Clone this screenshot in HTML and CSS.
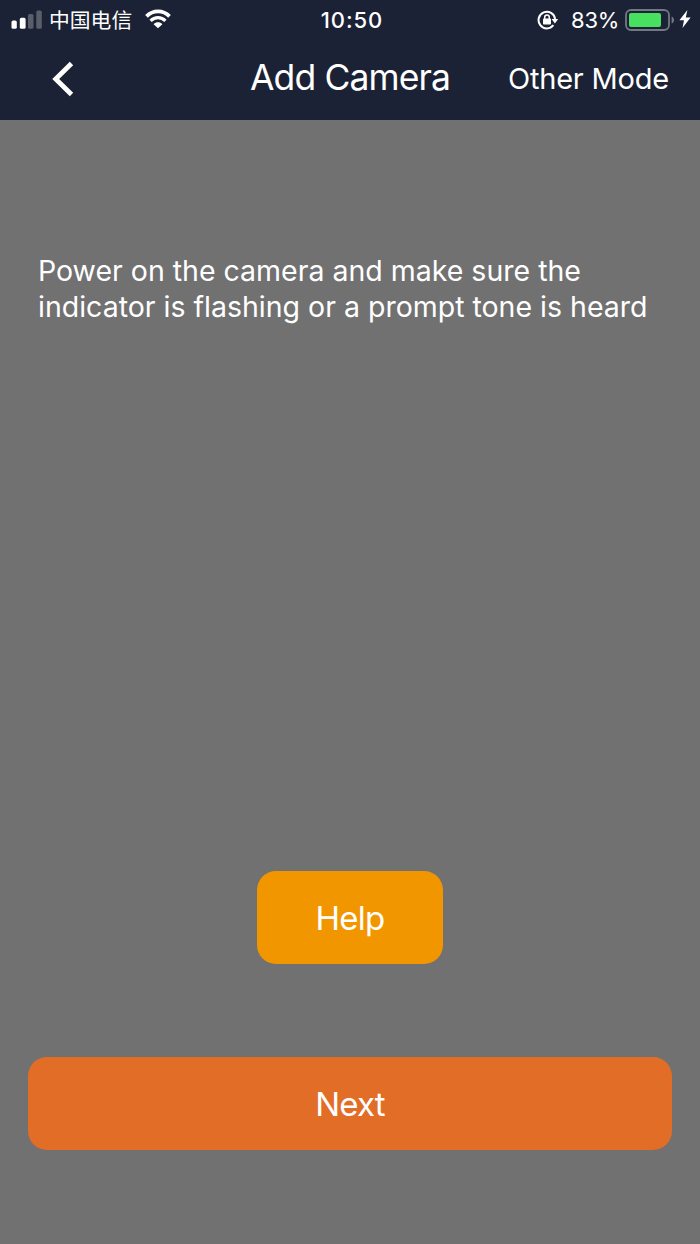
FILE: index.html
```
<!DOCTYPE html>
<html lang="en">
<head>
    <meta charset="UTF-8" />
    <meta name="viewport" content="width=device-width, initial-scale=1.0"/>
    <title>Add Camera</title>
    <link rel="stylesheet" href="styles.css">
</head>
<body>
    <header>
        <div class="status-bar">
            <div class="status-left">
                <svg class="signal" width="31" height="19" viewBox="0 0 31 19">
                    <rect x="0.5" y="10.5" width="5.3" height="8.3" rx="1.6" fill="#fff"/>
                    <rect x="8.8" y="7.8" width="5.8" height="11" rx="1.6" fill="#fff"/>
                    <rect x="17" y="4" width="5.5" height="14.8" rx="1.6" fill="#5a5e6b"/>
                    <rect x="25.3" y="0.5" width="5.5" height="18.3" rx="1.6" fill="#5a5e6b"/>
                </svg>
                <span class="carrier" lang="zh">中国电信</span>
                <svg class="wifi" width="26" height="20" viewBox="0 0 26 20">
                    <path d="M1.5 7.3C8 .7 18 .7 24.5 7.3" fill="none" stroke="#fff" stroke-width="3.8"/>
                    <path d="M5.6 11.8C9.8 7.6 16.2 7.6 20.4 11.8" fill="none" stroke="#fff" stroke-width="3.2"/>
                    <path d="M13 19.2L8.6 15.2C11.2 12.7 14.8 12.7 17.4 15.2Z" fill="#fff"/>
                </svg>
            </div>
            <div class="time">10:50</div>
            <div class="status-right">
                <svg class="lock" width="22" height="20" viewBox="0 0 22 20">
                    <path d="M16.4 15.2A8.3 8.3 0 1 1 18.1 9" fill="none" stroke="#fff" stroke-width="2"/>
                    <path d="M14.6 9h6.6L17.9 13.4Z" fill="#fff"/>
                    <rect x="6" y="8.6" width="8" height="6" rx="0.8" fill="#fff"/>
                    <path d="M7.7 9V7.2a2.3 2.3 0 0 1 4.6 0V9" fill="none" stroke="#fff" stroke-width="1.5"/>
                </svg>
                <span class="percent">83%</span>
                <svg class="battery" width="50" height="22" viewBox="0 0 50 22">
                    <rect x="1" y="1" width="43" height="20" rx="5" fill="none" stroke="#747883" stroke-width="1.8"/>
                    <rect x="4" y="4" width="32" height="14" rx="2" fill="#47e15f"/>
                    <path d="M46.6 7.5C49.8 8.5 49.8 13.5 46.6 14.5Z" fill="#747883"/>
                </svg>
                <svg class="bolt" width="12" height="18" viewBox="0 0 12 18">
                    <path d="M8.4 0L.4 10.2H5L3.5 18L11.6 7.4H6.8Z" fill="#fff"/>
                </svg>
            </div>
        </div>
        <nav>
            <a class="back" aria-label="Back">
                <svg width="24" height="38" viewBox="0 0 24 38">
                    <path d="M20.5 3.5L4.7 19L20.5 34.5" fill="none" stroke="#fff" stroke-width="4.8"/>
                </svg>
            </a>
            <h1>Add Camera</h1>
            <a class="mode">Other Mode</a>
        </nav>
    </header>

    <main>
        <p>Power on the camera and make sure the<br>indicator is flashing or a prompt tone is heard</p>
        <button class="help">Help</button>
        <button class="next">Next</button>
    </main>
</body>
</html>
```
FILE: styles.css
```
* {
    box-sizing: border-box;
}

body {
    margin: 0;
    height: 1244px;
    display: flex;
    flex-direction: column;
    font-family: Inter, "Noto Sans CJK SC", sans-serif;
    background: #717171;
    color: white;
    overflow: hidden;
}

svg {
    display: block;
    flex: none;
}

header {
    height: 120px;
    background: #1c2235;
}

.status-bar {
    height: 40px;
    display: grid;
    grid-template-columns: 1fr auto 1fr;
    align-items: center;
    padding: 0 9px 0 11px;
    white-space: nowrap;
}

.status-left, .status-right {
    display: flex;
    align-items: center;
}

.status-right {
    justify-content: flex-end;
}

.signal {
    margin-top: -2px;
}

.carrier {
    font-family: "Noto Sans CJK SC", sans-serif;
    font-size: 20.8px;
    line-height: 38px;
    margin: -2px 13px 0 7px;
}

.wifi {
    margin-top: -3px;
}

.time {
    font-size: 22px;
    font-weight: 500;
    letter-spacing: 0.9px;
    padding-left: 2px;
}

.lock {
    margin-top: -1px;
}

.percent {
    font-size: 22px;
    margin: 0 6px 0 12px;
    letter-spacing: -0.3px;
}

.bolt {
    margin-left: 4px;
    margin-top: -2px;
}

nav {
    height: 80px;
    display: grid;
    grid-template-columns: 1fr auto 1fr;
    align-items: center;
    padding: 0 31px 4px;
}

.back {
    margin: 2px 0 0 20px;
}

h1 {
    margin: -2px 0 0;
    font-size: 35.5px;
    font-weight: 400;
    letter-spacing: -0.9px;
}

.mode {
    justify-self: end;
    font-size: 29px;
    letter-spacing: -0.2px;
}

main {
    flex: 1;
    display: flex;
    flex-direction: column;
    align-items: center;
    padding: 133px 28px 94px;
}

p {
    margin: 0 0 auto 10px;
    align-self: flex-start;
    font-size: 28.5px;
    line-height: 36px;
    white-space: nowrap;
}

button {
    height: 93px;
    padding: 0;
    border: none;
    border-radius: 19px;
    color: white;
    font-family: inherit;
    font-size: 33px;
    letter-spacing: -0.8px;
}

.help {
    width: 186px;
    margin-bottom: 93px;
    background: #f29600;
}

.next {
    width: 100%;
    background: #e16d27;
}
```
